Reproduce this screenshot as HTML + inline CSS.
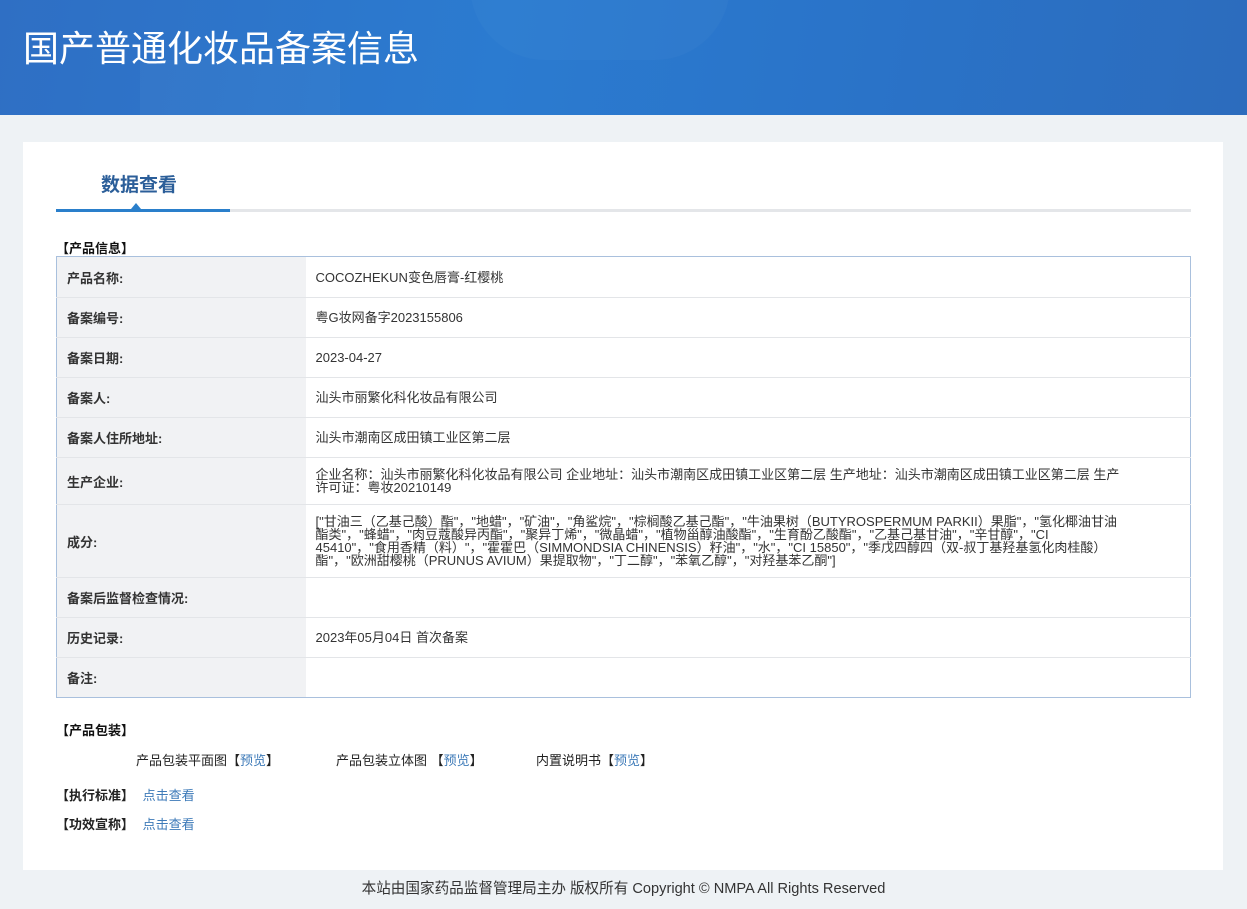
<!DOCTYPE html>
<html><head><meta charset="utf-8"><style>
*{margin:0;padding:0;box-sizing:border-box}
body{width:1247px;height:909px;background:#eef2f5;font-family:"Liberation Sans","Noto Sans CJK SC",sans-serif;color:#333;overflow:hidden;position:relative}
.hdr{position:absolute;left:0;top:0;width:1247px;height:115px;background:linear-gradient(100deg,#2f6fc4 0%,#2b7bd0 40%,#2a73c8 70%,#2c6cbd 100%);overflow:hidden}
.hdr .c1{position:absolute;left:470px;top:-90px;width:260px;height:150px;border-radius:80px;background:rgba(255,255,255,.025)}
.hdr .c2{position:absolute;left:140px;top:60px;width:200px;height:60px;background:rgba(255,255,255,.03)}
.hdr h1{position:absolute;left:23px;top:20px;font-size:36px;font-weight:normal;color:#fff;font-family:"Noto Sans CJK SC",sans-serif}
.card{position:absolute;left:23px;top:142px;width:1200px;height:728px;background:#fff}
.tab{position:absolute;left:78px;top:28px;font-size:19px;font-weight:bold;color:#2b5e99}
.line{position:absolute;left:33px;top:67px;width:1135px;height:3px;background:#e4e6e9}
.line2{position:absolute;left:33px;top:67px;width:174px;height:3px;background:#2a7fcb}
.tri{position:absolute;left:108px;top:61px;width:0;height:0;border-left:5px solid transparent;border-right:5px solid transparent;border-bottom:6px solid #2a7fcb}
.sec{position:absolute;font-size:13px;font-weight:bold;color:#111}
table{position:absolute;left:33px;top:114px;width:1135px;border-collapse:collapse;border:1px solid #a9c0dd;font-size:13px}
td{border-top:1px solid #e3e5e8;padding:0 10px;vertical-align:middle}
td.l{width:249px;background:#f1f2f4;font-weight:bold;color:#333}
td.v{color:#333;line-height:13px;padding-right:70px}
a{color:#3d7ab8;text-decoration:none}
.t{position:absolute;font-size:13px;color:#222}
.foot{position:absolute;top:877px;left:0;width:1247px;text-align:center;font-size:14.6px;color:#333}
</style></head><body>
<div class="hdr"><div class="c1"></div><div class="c2"></div><h1>国产普通化妆品备案信息</h1></div>
<div class="card">
<div class="tab">数据查看</div>
<div class="line"></div><div class="line2"></div><div class="tri"></div>
<div class="sec" style="left:33px;top:96px">【产品信息】</div>
<table>
<tr style="height:41px"><td class="l" style="border-top:none">产品名称:</td><td class="v" style="border-top:none">COCOZHEKUN变色唇膏-红樱桃</td></tr>
<tr style="height:40px"><td class="l">备案编号:</td><td class="v">粤G妆网备字2023155806</td></tr>
<tr style="height:40px"><td class="l">备案日期:</td><td class="v">2023-04-27</td></tr>
<tr style="height:40px"><td class="l">备案人:</td><td class="v">汕头市丽繁化科化妆品有限公司</td></tr>
<tr style="height:40px"><td class="l">备案人住所地址:</td><td class="v">汕头市潮南区成田镇工业区第二层</td></tr>
<tr style="height:47px"><td class="l">生产企业:</td><td class="v">企业名称：汕头市丽繁化科化妆品有限公司 企业地址：汕头市潮南区成田镇工业区第二层 生产地址：汕头市潮南区成田镇工业区第二层 生产许可证：粤妆20210149</td></tr>
<tr style="height:73px"><td class="l">成分:</td><td class="v">["甘油三（乙基己酸）酯"，"地蜡"，"矿油"，"角鲨烷"，"棕榈酸乙基己酯"，"牛油果树（BUTYROSPERMUM PARKII）果脂"，"氢化椰油甘油酯类"，"蜂蜡"，"肉豆蔻酸异丙酯"，"聚异丁烯"，"微晶蜡"，"植物甾醇油酸酯"，"生育酚乙酸酯"，"乙基己基甘油"，"辛甘醇"，"CI 45410"，"食用香精（料）"，"霍霍巴（SIMMONDSIA CHINENSIS）籽油"，"水"，"CI 15850"，"季戊四醇四（双-叔丁基羟基氢化肉桂酸）酯"，"欧洲甜樱桃（PRUNUS AVIUM）果提取物"，"丁二醇"，"苯氧乙醇"，"对羟基苯乙酮"]</td></tr>
<tr style="height:40px"><td class="l">备案后监督检查情况:</td><td class="v"></td></tr>
<tr style="height:40px"><td class="l">历史记录:</td><td class="v">2023年05月04日 首次备案</td></tr>
<tr style="height:40px"><td class="l">备注:</td><td class="v"></td></tr>
</table>
<div class="sec" style="left:33px;top:578px">【产品包装】</div>
<div class="t" style="left:113px;top:608px">产品包装平面图【<a>预览</a>】</div>
<div class="t" style="left:313px;top:608px">产品包装立体图 【<a>预览</a>】</div>
<div class="t" style="left:513px;top:608px">内置说明书【<a>预览</a>】</div>
<div class="t" style="left:33px;top:643px"><b>【执行标准】</b> <a style="margin-left:5px">点击查看</a></div>
<div class="t" style="left:33px;top:672px"><b>【功效宣称】</b> <a style="margin-left:5px">点击查看</a></div>
</div>
<div class="foot">本站由国家药品监督管理局主办 版权所有 Copyright © NMPA All Rights Reserved</div>
</body></html>
